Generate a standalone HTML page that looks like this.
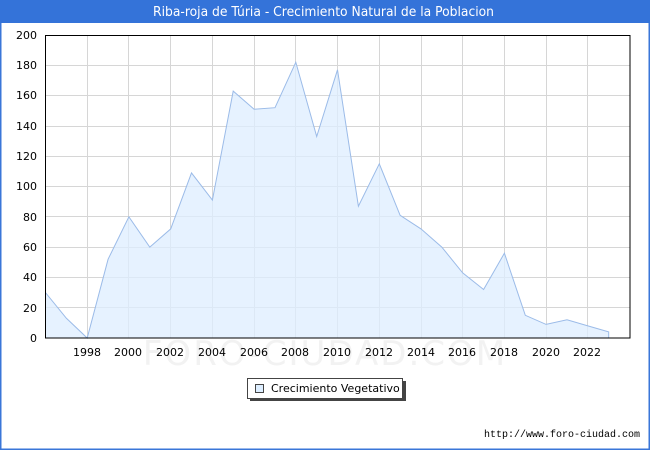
<!DOCTYPE html>
<html><head><meta charset="utf-8"><style>
body{margin:0;width:650px;height:450px;overflow:hidden;background:#fff;font-family:"DejaVu Sans","Liberation Sans",sans-serif}
</style></head><body>
<svg width="650" height="450" xmlns="http://www.w3.org/2000/svg" font-family="DejaVu Sans, Liberation Sans, sans-serif">
<rect x="0.5" y="0.5" width="649" height="449" fill="#fff" stroke="#3a76d8" stroke-width="2"/>
<rect x="0" y="0" width="650" height="23" fill="#3473d9"/>
<text x="153" y="16" fill="#fff" font-size="13" textLength="341" lengthAdjust="spacingAndGlyphs">Riba-roja de Túria - Crecimiento Natural de la Poblacion</text>
<g stroke="#d6d6d6" stroke-width="1">
<line x1="45" y1="307.5" x2="630" y2="307.5"/><line x1="45" y1="277.5" x2="630" y2="277.5"/><line x1="45" y1="247.5" x2="630" y2="247.5"/><line x1="45" y1="216.5" x2="630" y2="216.5"/><line x1="45" y1="186.5" x2="630" y2="186.5"/><line x1="45" y1="156.5" x2="630" y2="156.5"/><line x1="45" y1="126.5" x2="630" y2="126.5"/><line x1="45" y1="95.5" x2="630" y2="95.5"/><line x1="45" y1="65.5" x2="630" y2="65.5"/>
<line x1="87.5" y1="35" x2="87.5" y2="338"/><line x1="128.5" y1="35" x2="128.5" y2="338"/><line x1="170.5" y1="35" x2="170.5" y2="338"/><line x1="212.5" y1="35" x2="212.5" y2="338"/><line x1="254.5" y1="35" x2="254.5" y2="338"/><line x1="295.5" y1="35" x2="295.5" y2="338"/><line x1="337.5" y1="35" x2="337.5" y2="338"/><line x1="379.5" y1="35" x2="379.5" y2="338"/><line x1="421.5" y1="35" x2="421.5" y2="338"/><line x1="462.5" y1="35" x2="462.5" y2="338"/><line x1="504.5" y1="35" x2="504.5" y2="338"/><line x1="546.5" y1="35" x2="546.5" y2="338"/><line x1="587.5" y1="35" x2="587.5" y2="338"/>
</g>
<polygon fill="#ddeeff" fill-opacity="0.75" stroke="#9bbbe8" stroke-width="1" points="45.5,338 45.5,292.6 66.4,318.3 87.2,338 108.1,259.2 128.9,216.8 149.8,247.1 170.7,228.9 191.5,172.9 212.4,200.1 233.2,91.1 254.1,109.2 275,107.7 295.8,62.3 316.7,136.5 337.5,69.8 358.4,206.2 379.3,163.8 400.1,215.3 421,228.9 441.8,247.1 462.7,272.9 483.6,289.5 504.4,253.2 525.3,315.3 546.1,324.4 567,319.8 587.9,325.9 608.7,331.9 608.7,338"/>
<text x="325" y="365" fill="#f2f2f2" font-size="34" text-anchor="middle" letter-spacing="2">FORO-CIUDAD.COM</text>
<rect x="45.5" y="35.5" width="584.5" height="302.5" fill="none" stroke="#000" stroke-width="1"/>
<g font-size="11" fill="#000" text-anchor="end">
<text x="37" y="342">0</text><text x="37" y="312">20</text><text x="37" y="281">40</text><text x="37" y="251">60</text><text x="37" y="221">80</text><text x="37" y="190">100</text><text x="37" y="160">120</text><text x="37" y="130">140</text><text x="37" y="99">160</text><text x="37" y="69">180</text><text x="37" y="39">200</text>
</g>
<g font-size="11" fill="#000" text-anchor="middle">
<text x="87" y="356">1998</text><text x="128" y="356">2000</text><text x="170" y="356">2002</text><text x="212" y="356">2004</text><text x="254" y="356">2006</text><text x="295" y="356">2008</text><text x="337" y="356">2010</text><text x="379" y="356">2012</text><text x="421" y="356">2014</text><text x="462" y="356">2016</text><text x="504" y="356">2018</text><text x="546" y="356">2020</text><text x="587" y="356">2022</text>
</g>
<rect x="250" y="381" width="156" height="20" fill="#444"/>
<rect x="247.5" y="378.5" width="155" height="20" fill="#fff" stroke="#444"/>
<rect x="255.5" y="384.5" width="8" height="8" fill="#ddeeff" stroke="#444"/>
<text x="271" y="392" font-size="11" fill="#000">Crecimiento Vegetativo</text>
<text x="640" y="437" font-size="10" fill="#000" text-anchor="end" font-family="Liberation Mono, monospace">http://www.foro-ciudad.com</text>
</svg>
</body></html>
